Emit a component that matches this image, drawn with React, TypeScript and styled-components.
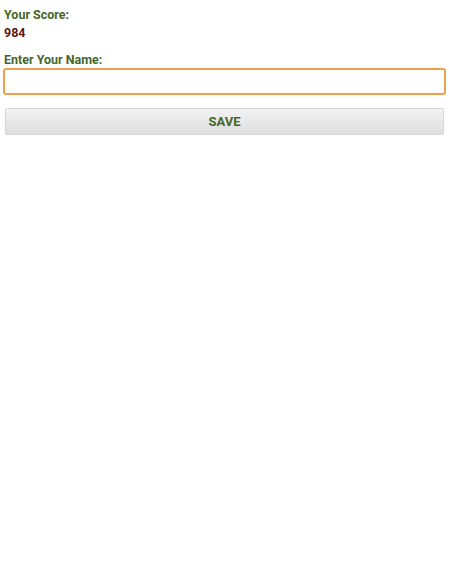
import React, { useState } from "react";
import styled, { createGlobalStyle } from "styled-components";

const GlobalStyle = createGlobalStyle`
  body {
    margin: 0;
    background: #ffffff;
    font-family: Roboto, "Liberation Sans", sans-serif;
  }
`;

const Page = styled.div`
  display: flex;
  flex-direction: column;
  padding: 6px 3px 0 3px;
`;

const Label = styled.div`
  font-size: 12.5px;
  font-weight: bold;
  color: #466628;
  line-height: 17px;
  padding-left: 1px;
`;

const Score = styled.div`
  font-size: 12.5px;
  font-weight: bold;
  color: #5c1616;
  line-height: 18px;
  padding-left: 1px;
  margin-top: 1px;
  margin-bottom: 9px;
`;

const NameInput = styled.input`
  box-sizing: border-box;
  width: 100%;
  height: 27px;
  border: 2px solid #f0a04a;
  border-radius: 3px;
  padding: 0 5px;
  font-family: inherit;
  font-size: 13px;
  outline: none;
  caret-color: #8a8aa0;
`;

const SaveButton = styled.button`
  box-sizing: border-box;
  margin: 13px 2px 0 2px;
  height: 27px;
  border: 1px solid #d8d8d8;
  border-radius: 2px;
  background: linear-gradient(#f3f3f3, #dddddd);
  box-shadow: 0 1px 1px rgba(0, 0, 0, 0.15);
  font-family: inherit;
  font-size: 13px;
  font-weight: bold;
  color: #466628;
  cursor: pointer;
`;

export default function App() {
  const [name, setName] = useState("");
  return (
    <>
      <GlobalStyle />
      <Page>
        <Label>Your Score:</Label>
        <Score>984</Score>
        <Label>Enter Your Name:</Label>
        <NameInput
          autoFocus
          value={name}
          onChange={(e) => setName(e.target.value)}
        />
        <SaveButton>SAVE</SaveButton>
      </Page>
    </>
  );
}
